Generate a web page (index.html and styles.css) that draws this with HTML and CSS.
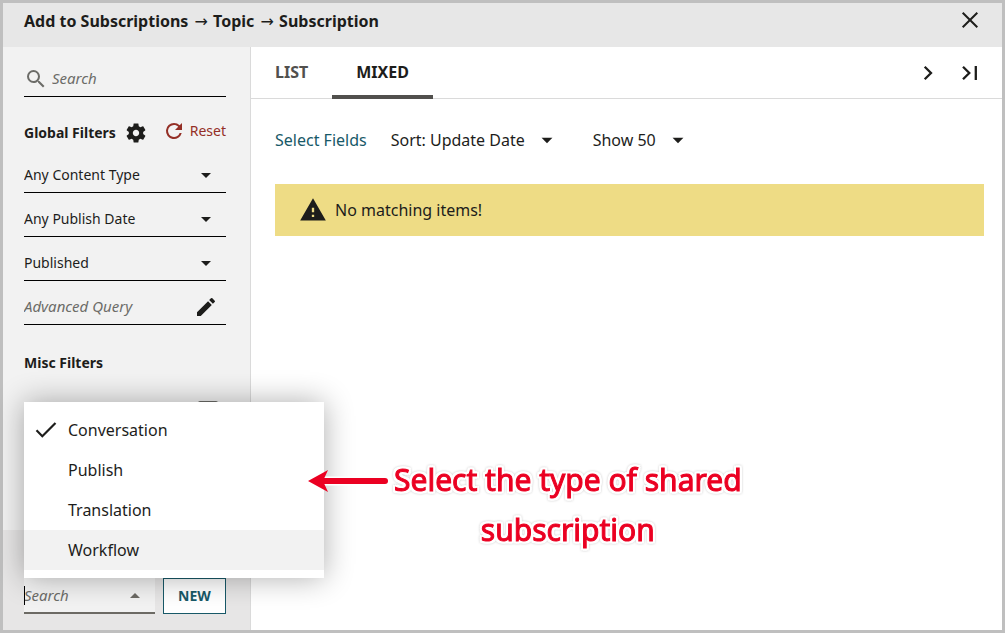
FILE: index.html
```html
<!DOCTYPE html>
<html lang="en">
<head>
<meta charset="utf-8">
<title>Add to Subscriptions</title>
<link rel="stylesheet" href="styles.css">
</head>
<body>
<div class="dialog">
  <header class="titlebar">
    <h1 class="title">Add to Subscriptions <span class="crumb-arrow">→</span> Topic <span class="crumb-arrow">→</span> Subscription</h1>
    <button class="icon-button" type="button" aria-label="Close"><svg width="24" height="24" viewBox="0 0 24 24"><path d="M4.700 4.700l14.600 14.600M19.300 4.700L4.700 19.300" stroke="currentColor" stroke-width="2" fill="none"/></svg></button>
  </header>

  <div class="body">
    <aside class="sidebar">
      <div class="filters">
        <label class="field search-field">
          <svg width="24" height="24" viewBox="0 0 24 24"><path fill="currentColor" d="M15.500 14h-.79l-.28-.27A6.471 6.471 0 0 0 16 9.500 6.500 6.500 0 1 0 9.500 16c1.610 0 3.090-.59 4.230-1.570l.27.28v.79l5 4.990L20.490 19l-4.990-5zm-6 0C7.010 14 5 11.990 5 9.500S7.010 5 9.500 5 14 7.010 14 9.500 11.990 14 9.500 14z"/></svg>
          <input class="text-input" type="text" placeholder="Search" aria-label="Search">
        </label>

        <div class="section-head">
          <h2 class="section-title">Global Filters</h2>
          <button class="icon-button" type="button" aria-label="Filter settings"><svg width="24" height="24" viewBox="0 0 24 24"><path fill="currentColor" d="M19.140 12.940c.04-.3.060-.61.060-.94 0-.32-.02-.64-.07-.94l2.030-1.580c.18-.14.230-.41.120-.61l-1.920-3.320c-.12-.22-.37-.29-.59-.22l-2.390.96c-.5-.38-1.030-.7-1.620-.94l-.36-2.540c-.04-.24-.24-.41-.48-.41h-3.840c-.24 0-.43.17-.47.41l-.36 2.540c-.59.24-1.130.57-1.620.94l-2.390-.96c-.22-.08-.47 0-.59.22L2.740 8.870c-.12.21-.08.47.12.61l2.030 1.580c-.05.3-.09.63-.09.94s.02.64.07.94l-2.030 1.580c-.18.14-.23.41-.12.61l1.920 3.320c.12.22.37.29.59.22l2.390-.96c.5.38 1.030.7 1.620.94l.36 2.540c.05.24.24.41.48.41h3.840c.24 0 .44-.17.47-.41l.36-2.540c.59-.24 1.130-.56 1.620-.94l2.390.96c.22.08.47 0 .59-.22l1.920-3.320c.12-.22.070-.47-.12-.61l-2.010-1.580zM12 15.200c-1.760 0-3.200-1.440-3.200-3.200s1.440-3.200 3.200-3.200 3.200 1.440 3.200 3.200-1.440 3.200-3.200 3.200z"/></svg></button>
          <button class="reset" type="button"><svg width="24" height="24" viewBox="0 0 24 24"><path fill="currentColor" d="M17.650 6.350A7.958 7.958 0 0 0 12 4a8 8 0 1 0 7.730 10h-2.080A6 6 0 1 1 12 6c1.660 0 3.140.69 4.220 1.780L13 11h7V4l-2.350 2.350z"/></svg>Reset</button>
        </div>

        <div class="field">
          <select class="select" aria-label="Content type"><option>Any Content Type</option></select>
          <svg class="caret" width="24" height="24" viewBox="0 0 24 24"><path d="M7 10l5 5 5-5z" fill="currentColor"/></svg>
        </div>
        <div class="field">
          <select class="select" aria-label="Publish date"><option>Any Publish Date</option></select>
          <svg class="caret" width="24" height="24" viewBox="0 0 24 24"><path d="M7 10l5 5 5-5z" fill="currentColor"/></svg>
        </div>
        <div class="field">
          <select class="select" aria-label="Status"><option>Published</option></select>
          <svg class="caret" width="24" height="24" viewBox="0 0 24 24"><path d="M7 10l5 5 5-5z" fill="currentColor"/></svg>
        </div>
        <div class="field query-field">
          <input class="text-input" type="text" placeholder="Advanced Query" aria-label="Advanced query">
          <button class="icon-button" type="button" aria-label="Edit query"><svg width="24" height="24" viewBox="0 0 24 24"><path fill="currentColor" d="M3 17.250V21h3.750L17.810 9.940l-3.750-3.750L3 17.250zM20.710 7.040a1 1 0 0 0 0-1.410l-2.340-2.340a1 1 0 0 0-1.410 0l-1.830 1.830 3.750 3.750 1.830-1.830z"/></svg></button>
        </div>

        <h2 class="section-title misc-title">Misc Filters</h2>
        <div class="misc-row"><input class="misc-check" type="checkbox" aria-label="Misc filter"></div>
      </div>

      <footer class="sidebar-foot">
        <div class="combo">
          <input class="text-input" type="text" placeholder="Search" aria-label="Subscription type" role="combobox" aria-expanded="true" aria-controls="types">
          <svg width="24" height="24" viewBox="0 0 24 24"><path d="M7 14l5-5 5 5z" fill="currentColor"/></svg>
          <ul class="menu" id="types" role="listbox">
            <li class="menu-item" role="option" aria-selected="true"><svg width="24" height="24" viewBox="0 0 24 24"><path d="M2.500 12.300l5.800 5.900L21.500 5" fill="none" stroke="currentColor" stroke-width="2.200"/></svg>Conversation</li>
            <li class="menu-item" role="option">Publish</li>
            <li class="menu-item" role="option">Translation</li>
            <li class="menu-item menu-item-active" role="option">Workflow</li>
          </ul>
        </div>
        <button class="new-button" type="button">NEW</button>
      </footer>
    </aside>

    <main class="main">
      <nav class="tabs">
        <button class="tab" type="button">LIST</button>
        <button class="tab tab-active" type="button">MIXED</button>
        <div class="pager">
          <button class="icon-button" type="button" aria-label="Next page"><svg width="24" height="24" viewBox="0 0 24 24"><path d="M8.700 5.700L15 12l-6.300 6.300" fill="none" stroke="currentColor" stroke-width="2.300"/></svg></button>
          <button class="icon-button" type="button" aria-label="Last page"><svg width="24" height="24" viewBox="0 0 24 24"><path d="M5 5.700L11.300 12 5 18.300M17.800 5v14" fill="none" stroke="currentColor" stroke-width="2.300"/></svg></button>
        </div>
      </nav>

      <section class="content">
        <div class="toolbar">
          <a class="link" href="#">Select Fields</a>
          <div class="dropdown">
            <select class="select" aria-label="Sort"><option>Sort: Update Date</option></select>
            <svg class="caret" width="26" height="26" viewBox="0 0 24 24"><path d="M7 10l5 5 5-5z" fill="currentColor"/></svg>
          </div>
          <div class="dropdown">
            <select class="select" aria-label="Page size"><option>Show 50</option></select>
            <svg class="caret" width="26" height="26" viewBox="0 0 24 24"><path d="M7 10l5 5 5-5z" fill="currentColor"/></svg>
          </div>
        </div>
        <div class="notice" role="status">
          <svg width="28" height="28" viewBox="0 0 24 24"><path fill="currentColor" d="M1 21h22L12 2 1 21zm12-3h-2v-2h2v2zm0-4h-2v-4h2v4z"/></svg>
          No matching items!
        </div>
      </section>

      <div class="callout">
        <svg width="82" height="24" viewBox="0 0 82 24"><path d="M14 12h63" stroke="#fff" stroke-width="9" stroke-linecap="round"/><path d="M14 12h63" stroke="currentColor" stroke-width="6" stroke-linecap="round"/><path d="M0 12L20 1l-5 11 5 11z" fill="currentColor"/></svg>
        <p class="callout-text">Select the type of shared<br>subscription</p>
      </div>
    </main>
  </div>
</div>
</body>
</html>
```

FILE: styles.css
```css
* {
  box-sizing: border-box;
}

body {
  margin: 0;
  font: 16px/24px "Noto Sans", sans-serif;
  color: #1d1d1b;
}

button,
input,
select {
  font: inherit;
  color: inherit;
  margin: 0;
  padding: 0;
  border: 0;
  border-radius: 0;
  background: none;
}

svg {
  display: block;
  flex: none;
}

.dialog {
  display: flex;
  flex-direction: column;
  min-height: 100vh;
  border: 3px solid #bfbfbf;
  background: #fff;
}

.titlebar {
  display: flex;
  justify-content: space-between;
  align-items: flex-start;
  height: 44px;
  padding: 5px 20px 0 21px;
  background: #e7e7e7;
}

.title {
  margin: 0;
  padding-top: 1px;
  font-size: 16px;
  font-weight: 700;
}

.crumb-arrow {
  padding: 0 1px 0 2px;
  font-family: "DejaVu Sans", sans-serif;
  font-weight: 400;
  line-height: 16px;
}

.icon-button {
  display: flex;
}

.body {
  display: flex;
  flex: 1;
}

.sidebar {
  display: flex;
  flex-direction: column;
  flex: none;
  width: 248px;
  border-right: 1px solid #dadada;
  background: #f2f2f2;
  font-size: 14px;
}

.filters {
  flex: 1;
  padding: 14px 24px 0 21px;
}

.field {
  position: relative;
  display: flex;
  align-items: center;
  height: 36px;
  margin-bottom: 8px;
  border-bottom: 1px solid #000;
}

.search-field {
  gap: 4px;
  margin-bottom: 24px;
  color: #6c6c68;
}

.query-field {
  padding-right: 8px;
}

.text-input {
  flex: 1;
  min-width: 0;
  height: 24px;
  outline: 0;
}

.text-input::placeholder {
  color: #6c6c68;
  font-size: 15px;
  font-style: italic;
  opacity: 1;
}

.select {
  flex: 1;
  height: 24px;
  appearance: none;
  outline: 0;
}

.caret {
  position: absolute;
  right: 8px;
  pointer-events: none;
}

.section-head {
  display: flex;
  align-items: center;
  height: 24px;
  margin-bottom: 12px;
}

.section-title {
  margin: 0 8px 0 0;
  font-size: 14px;
  font-weight: 700;
}

.reset {
  display: flex;
  gap: 4px;
  margin: 0 0 4px auto;
  color: #942f26;
}

.misc-title {
  margin-top: 26px;
}

.misc-row {
  display: flex;
  justify-content: flex-end;
  padding: 26px 8px 0 0;
}

.misc-check {
  width: 20px;
  height: 20px;
  margin: 0;
  appearance: none;
  border: 2px solid #6c6c68;
  border-radius: 2px;
}

.sidebar-foot {
  display: flex;
  gap: 8px;
  padding: 48px 24px 16px 21px;
  background: #e7e6e6;
}

.combo {
  position: relative;
  display: flex;
  flex: 1;
  align-items: center;
  min-width: 0;
  height: 36px;
  padding: 1px 8px 0 0;
  border-bottom: 2px solid #6c6a64;
  background: #f2f2f2;
  color: #6c6a64;
}

.combo::before {
  content: "";
  position: absolute;
  left: 0;
  width: 1px;
  height: 19px;
  background: #000;
}

.menu {
  position: absolute;
  z-index: 1;
  bottom: 100%;
  left: 0;
  width: 300px;
  margin: 0;
  padding: 8px 0;
  list-style: none;
  background: #fff;
  box-shadow: 0 0 28px rgba(0, 0, 0, 0.32);
  color: #1d1d1b;
  font-size: 16px;
}

.menu-item {
  display: flex;
  align-items: center;
  height: 40px;
  padding-left: 44px;
}

.menu-item[aria-selected="true"] {
  gap: 10px;
  padding-left: 10px;
}

.menu-item-active {
  background: #f2f2f2;
}

.new-button {
  flex: none;
  width: 63px;
  height: 36px;
  border: 1px solid #185968;
  background: #fff;
  color: #185968;
  font-weight: 700;
}

.main {
  flex: 1;
  min-width: 0;
}

.tabs {
  display: flex;
  height: 52px;
  border-bottom: 1px solid #dadada;
}

.tab {
  height: 52px;
  padding: 2px 24px 0;
  border-bottom: 4px solid transparent;
  color: #51504d;
  font-weight: 700;
}

.tab-active {
  border-bottom-color: #51504d;
  color: #1d1d1b;
}

.pager {
  display: flex;
  align-items: center;
  gap: 18px;
  margin-left: auto;
  padding-right: 20px;
}

.content {
  padding: 29px 18px 0 24px;
}

.toolbar {
  display: flex;
  gap: 24px;
  margin-bottom: 32px;
}

.link {
  color: #185968;
  text-decoration: none;
}

.dropdown {
  position: relative;
  display: flex;
  align-items: center;
}

.dropdown .select {
  padding-right: 43px;
}

.dropdown .caret {
  right: 9px;
}

.notice {
  display: flex;
  align-items: center;
  gap: 8px;
  min-height: 52px;
  padding: 0 24px;
  background: #eedc85;
}

.callout {
  position: absolute;
  z-index: 2;
  top: 455px;
  left: 308px;
  display: flex;
  gap: 4px;
  color: #eb0022;
}

.callout svg {
  margin-top: 14px;
}

.callout-text {
  margin: 0;
  font-size: 30px;
  line-height: 50px;
  text-align: center;
  -webkit-text-stroke: 1px #eb0022;
  filter:
    drop-shadow(2px 0 0 #fff)
    drop-shadow(-2px 0 0 #fff)
    drop-shadow(0 2px 0 #fff)
    drop-shadow(0 -2px 0 #fff)
    drop-shadow(0 0 1px #ccc);
}
```
